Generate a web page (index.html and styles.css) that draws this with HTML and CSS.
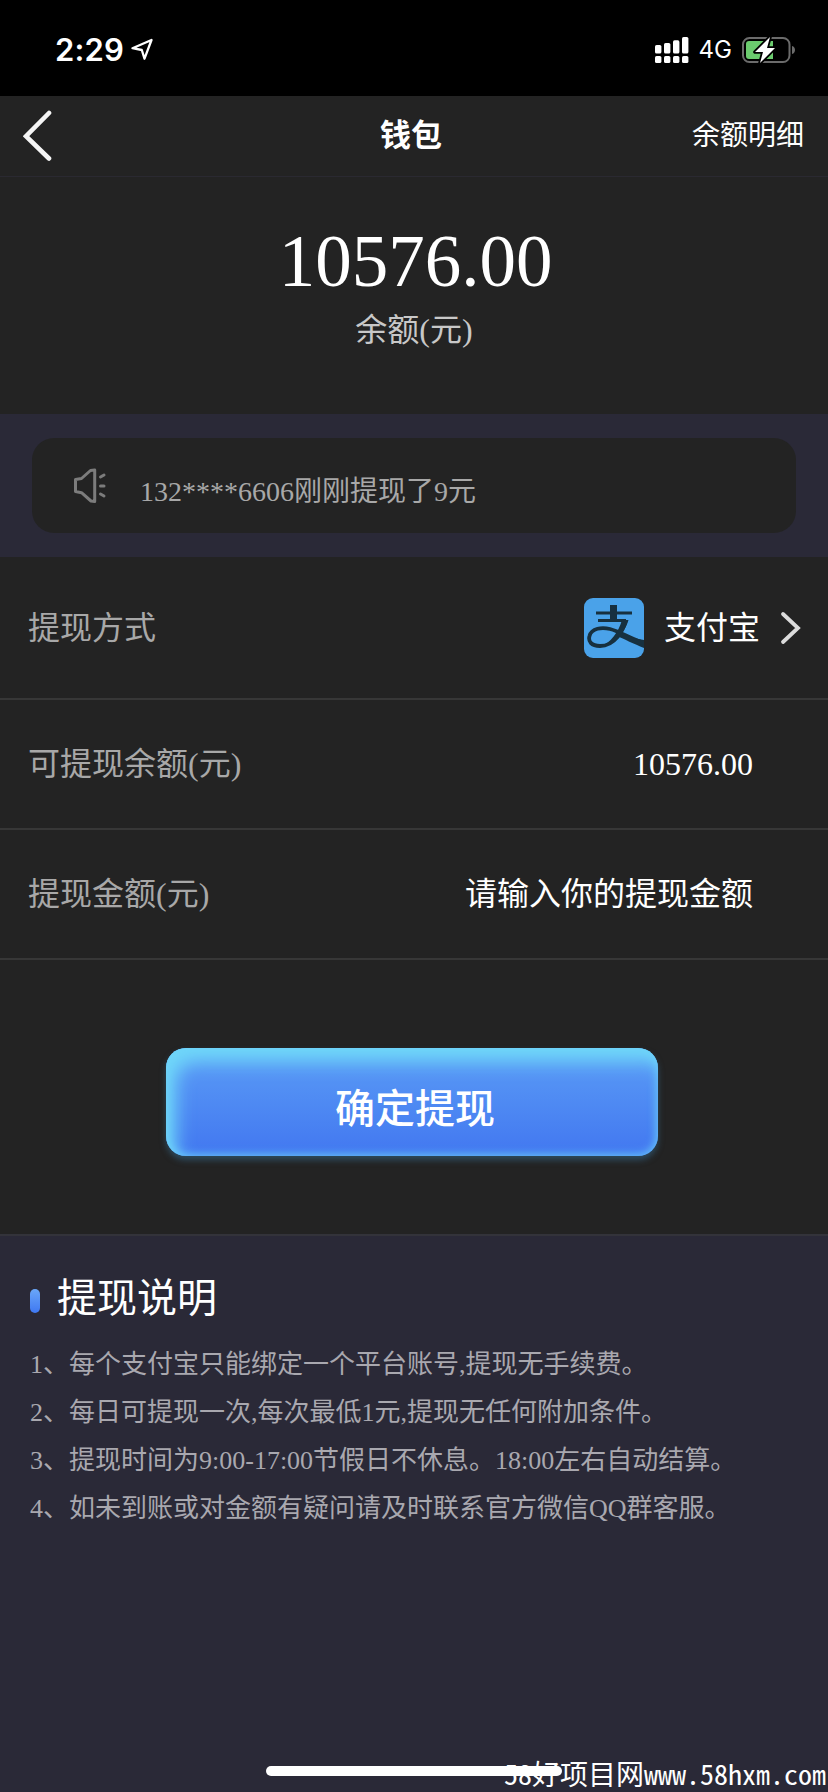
FILE: index.html
```html
<!DOCTYPE html>
<html lang="zh-CN">
<head>
<meta charset="utf-8">
<title>钱包</title>
<link rel="stylesheet" href="styles.css">
</head>
<body>
<div class="screen">
  <header class="status">
    <div class="status-left">
      <span class="time">2:29</span>
      <svg class="locate" viewBox="0 0 24 24" width="24" height="24"><path d="M1.500 10.200 20.500 2 13.500 20.700 10.800 12Z" fill="none" stroke="#fff" stroke-width="2.300" stroke-linejoin="round"/></svg>
    </div>
    <div class="status-right">
      <svg class="signal" viewBox="0 0 34 27" width="34" height="27" fill="#fff">
        <rect x="0" y="8" width="6.4" height="8.5" rx="1.6"/><rect x="9" y="6" width="6.4" height="10.5" rx="1.6"/><rect x="18" y="3.3" width="6.4" height="13.2" rx="1.6"/><rect x="27" y="0" width="6.4" height="16.5" rx="1.6"/>
        <rect x="0" y="19" width="6.4" height="7" rx="1.6"/><rect x="9" y="19" width="6.4" height="7" rx="1.6"/><rect x="18" y="19" width="6.4" height="7" rx="1.6"/><rect x="27" y="19" width="6.4" height="7" rx="1.6"/>
      </svg>
      <span class="net">4G</span>
      <svg class="battery" viewBox="0 0 54 28" width="54" height="28">
        <rect x="1" y="2" width="46.5" height="24" rx="6.5" fill="none" stroke="#6b6b6b" stroke-width="2"/>
        <path d="M50 10c4 1 4 7 0 8z" fill="#6b6b6b"/>
        <path d="M7 5h24v18H7a3 3 0 0 1-3-3V8a3 3 0 0 1 3-3z" fill="#6bcb6e"/>
        <path d="M28 1 13 16h8l-3 11 15-15h-8z" fill="#fff" stroke="#000" stroke-width="3.6" stroke-linejoin="round" paint-order="stroke"/>
      </svg>
    </div>
  </header>

  <nav class="nav">
    <svg class="back" viewBox="0 0 30 52" width="30" height="52"><path d="M26 3 3 26.200 26 48.500" fill="none" stroke="#f5f5f5" stroke-width="4.600" stroke-linecap="round"/></svg>
    <h1 class="title">钱包</h1>
    <span class="detail">余额明细</span>
  </nav>

  <section class="balance">
    <div class="amount">10576.00</div>
    <div class="unit">余额(元)</div>
  </section>

  <section class="notice">
    <div class="notice-card">
      <svg class="horn" viewBox="0 0 34 36" width="34" height="36" fill="none" stroke="#7c7c7c" stroke-width="3" stroke-linejoin="round" stroke-linecap="round"><path d="M2.500 11.500 8.500 10.500 17.500 2.500 21.700 2V33.500L18 33 8.500 24.700 2.500 23.500Z"/><path d="m27.500 9 3.500-2M27.500 18h3.500M27.500 26l3.500 2"/></svg>
      <span class="notice-text">132****6606刚刚提现了9元</span>
    </div>
  </section>

  <section class="form">
    <div class="row row-method">
      <span class="label">提现方式</span>
      <div class="method">
        <svg class="alipay" viewBox="0 0 60 60" width="60" height="60">
          <rect width="60" height="60" rx="9" fill="#4aa2e9"/>
          <g fill="none" stroke="#17303f">
            <path d="M12 15H48M14 22.500H42" stroke-width="2.800"/>
            <path d="M29.500 7V22" stroke-width="7"/>
            <path d="M42 22C39 33 31 48 16 48 7 48 4 43 5.500 38 7.500 30 18 29 26 31 36 33.500 47 41 60 45" stroke-width="3.800"/>
          </g>
          <path d="M38 22h6.500c-1.500 5-4 9.500-7 13.500 7 3 15 5.800 22.500 6.500v8C50 46 40 41 33 38c-4.500 5-10 10-18 11.500C27 45 34.500 34 38 22z" fill="#17303f"/>
        </svg>
        <span class="value">支付宝</span>
        <svg class="chevron" viewBox="0 0 22 34" width="22" height="34"><path d="M3 3 18 17 3 31" fill="none" stroke="#dcdcdc" stroke-width="3.800" stroke-linecap="round"/></svg>
      </div>
    </div>
    <div class="row">
      <span class="label">可提现余额(元)</span>
      <span class="value">10576.00</span>
    </div>
    <div class="row">
      <span class="label">提现金额(元)</span>
      <span class="value">请输入你的提现金额</span>
    </div>
    <div class="action"><button class="submit">确定提现</button></div>
  </section>

  <section class="notes">
    <h2 class="notes-title"><i class="mark"></i>提现说明</h2>
    <div class="notes-list">
      <p>1、每个支付宝只能绑定一个平台账号,提现无手续费。</p>
      <p>2、每日可提现一次,每次最低1元,提现无任何附加条件。</p>
      <p>3、提现时间为9:00-17:00节假日不休息。18:00左右自动结算。</p>
      <p>4、如未到账或对金额有疑问请及时联系官方微信QQ群客服。</p>
    </div>
  </section>
  <div class="watermark">58好项目网www.58hxm.com</div>
  <div class="home-bar"></div>
</div>
</body>
</html>
```
FILE: styles.css
```css
* { box-sizing: border-box; }
body {
  margin: 0;
  background: #2a2937;
  color: #fff;
  font-family: "Liberation Serif", "Noto Sans CJK SC", serif;
}
h1, h2, p { margin: 0; font-weight: 400; }
svg { display: block; flex: none; }
.screen {
  position: relative;
  width: 828px;
  height: 1792px;
  display: flex;
  flex-direction: column;
  overflow: hidden;
}

.status {
  height: 96px;
  background: #000;
  display: flex;
  justify-content: space-between;
  padding: 30px 33px 0 55px;
  font-family: Inter, sans-serif;
}
.status-left, .status-right { display: flex; align-items: center; height: 40px; }
.time { font-size: 31px; font-weight: 600; line-height: 40px; letter-spacing: 0.2px; }
.locate { margin-left: 7px; }
.status-right { margin-right: -1px; }
.net { font-size: 24px; font-weight: 400; line-height: 42px; margin: 0 10px; }

.nav {
  height: 81px;
  background: #232323;
  border-bottom: 1px solid #2a2931;
  display: grid;
  grid-template-columns: 1fr auto 1fr;
  align-items: center;
  padding: 0 24px 0 23px;
}
.title { margin-right: 5px; font-size: 31px; font-weight: 700; line-height: 48px; }
.detail { justify-self: end; font-size: 28px; line-height: 40px; }

.balance {
  height: 237px;
  background: #232323;
  display: flex;
  flex-direction: column;
  align-items: center;
  padding-top: 43px;
}
.amount { padding-left: 3px; font-size: 73px; line-height: 84px; }
.unit { margin-top: 2px; font-size: 32px; line-height: 48px; color: #c8c8c8; }

.notice { height: 143px; padding: 24px 32px; background: #2a2937; }
.notice-card {
  height: 95px;
  border-radius: 22px;
  background: #232323;
  display: flex;
  align-items: center;
  padding-left: 41px;
}
.notice-text { margin: 13px 0 0 33px; font-size: 28px; line-height: 40px; color: #a8a8a8; }

.form { height: 679px; background: #232323; border-bottom: 2px solid #33333a; }
.row {
  height: 130px;
  border-bottom: 2px solid #373737;
  display: flex;
  align-items: center;
  justify-content: space-between;
  padding: 0 75px 0 28px;
  font-size: 32px;
  line-height: 48px;
}
.row-method { height: 143px; padding-right: 26px; }
.label { color: #a8a8a8; }
.method { display: flex; align-items: center; }
.method .value { margin: 0 20px; }

.action { display: flex; justify-content: center; padding-top: 88px; }
.submit {
  width: 492px;
  height: 108px;
  margin-right: 4px;
  padding: 8px 0 0 6px;
  border: 0;
  border-radius: 20px;
  background: linear-gradient(#5b9df6, #4277f0);
  box-shadow:
    inset 10px 14px 18px #6fd6f9,
    inset 0 0 9px 2px #63bdf8,
    0 4px 6px rgba(55, 115, 155, 0.5);
  color: #fff;
  font: 500 40px/56px "Noto Sans CJK SC", sans-serif;
}

.notes { flex: 1; padding: 33px 30px 0; }
.notes-title { display: flex; align-items: center; font-size: 40px; line-height: 60px; }
.mark {
  width: 10px;
  height: 24px;
  margin: 3px 17px 0 0;
  border-radius: 5px;
  background: linear-gradient(#6aa7f8, #3f78f2);
}
.notes-list { padding-top: 12px; font-size: 26px; color: #a9a8af; }
.notes-list p { height: 48px; line-height: 48px; white-space: nowrap; }

.watermark {
  position: absolute;
  right: 2px;
  bottom: -1px;
  font: 28px/40px "Noto Sans CJK SC", sans-serif;
  font-feature-settings: "hwid";
  white-space: nowrap;
}
.home-bar {
  position: absolute;
  left: 266px;
  top: 1766px;
  width: 296px;
  height: 10px;
  border-radius: 5px;
  background: #fff;
}
```
